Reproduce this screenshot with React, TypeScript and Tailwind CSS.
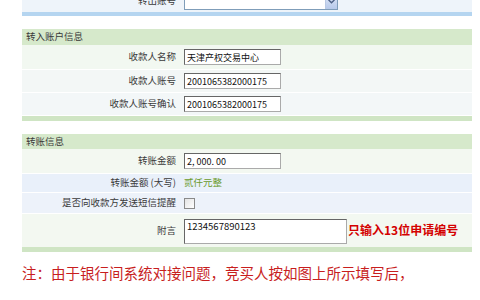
import React from "react";

const font = { fontFamily: '"Noto Sans CJK SC", "Noto Sans", sans-serif' };

function Row({
  label,
  bg,
  h,
  children,
}: {
  label: string;
  bg: string;
  h: string;
  children?: React.ReactNode;
}) {
  return (
    <div className={`flex items-center border-b border-white ${bg} ${h}`}>
      <div className="w-[158px] shrink-0 pr-[4px] text-right text-[9.5px] leading-none text-[#3a3a3a]">
        {label}
      </div>
      <div className="flex flex-1 items-center pl-[4px]">{children}</div>
    </div>
  );
}

function Input({ value, w = "w-[97px]", h = "h-[16px]" }: { value: string; w?: string; h?: string }) {
  return (
    <div
      className={`${w} ${h} flex items-center border border-t-[#666] border-l-[#666] border-r-[#aaa] border-b-[#aaa] bg-white pl-[2px] text-[9px] leading-none text-[#111]`}
      style={{ fontFamily: '"Noto Sans CJK SC", "Liberation Sans", sans-serif' }}
    >
      {value}
    </div>
  );
}

export default function App() {
  return (
    <div className="h-[300px] w-[480px] overflow-hidden bg-white" style={font}>
      <div className="ml-[22px] w-[450px]">
        {/* top row (cut) */}
        <div className="-mt-[10px] flex h-[22px] items-center bg-[#eef4fa]">
          <div className="w-[158px] shrink-0 pr-[4px] text-right text-[9.5px] leading-none text-[#3a3a3a]">
            转出账号
          </div>
          <div className="pl-[4px]">
            <div className="flex h-[17px] w-[154px] items-center justify-end border border-[#7f9db9] bg-white">
              <div className="flex h-[15px] w-[12px] items-center justify-center border-l border-[#b9c9e4] bg-gradient-to-b from-[#dfe8f7] to-[#b7c9ea]">
                <svg width="7" height="5" viewBox="0 0 7 5">
                  <path d="M0.5 0.8 L3.5 3.8 L6.5 0.8" stroke="#4d6185" strokeWidth="1.4" fill="none" />
                </svg>
              </div>
            </div>
          </div>
        </div>
        <div className="h-[4px] bg-[#b5d5f0]" />

        <div className="h-[13px]" />

        {/* section 1 */}
        <div className="flex h-[16px] items-center bg-[#d6e9cb] pl-[4px] text-[9.5px] leading-none text-[#3a3a3a]">
          转入账户信息
        </div>
        <Row label="收款人名称" bg="bg-[#f2f8f1]" h="h-[25px]">
          <Input value="天津产权交易中心" />
        </Row>
        <Row label="收款人账号" bg="bg-[#f3f7f6]" h="h-[23px]">
          <Input value="2001065382000175" />
        </Row>
        <Row label="收款人账号确认" bg="bg-[#f3f7f8]" h="h-[23px]">
          <Input value="2001065382000175" />
        </Row>
        <div className="h-[5px] bg-[#cfe5c4]" />

        <div className="h-[13px]" />

        {/* section 2 */}
        <div className="flex h-[15px] items-center bg-[#d6e9cb] pl-[4px] text-[9.5px] leading-none text-[#3a3a3a]">
          转账信息
        </div>
        <Row label="转账金额" bg="bg-[#f3f8f1]" h="h-[25px]">
          <Input value="2, 000. 00" />
        </Row>
        <Row label="转账金额 (大写)" bg="bg-[#e9f0fa]" h="h-[19px]">
          <span className="text-[9.5px] leading-none text-[#6a9a2c]">贰仟元整</span>
        </Row>
        <Row label="是否向收款方发送短信提醒" bg="bg-[#edf2fa]" h="h-[21px]">
          <div className="h-[11px] w-[11px] border border-[#8a8a8a] bg-gradient-to-br from-[#e4e4e4] to-white" />
        </Row>
        <div className="flex h-[33px] items-center bg-[#f3f8f1]">
          <div className="w-[158px] shrink-0 pr-[4px] text-right text-[9.5px] leading-none text-[#3a3a3a]">
            附言
          </div>
          <div className="flex flex-1 items-start self-stretch pl-[4px] pt-[5px]">
            <div
              className="flex h-[25px] w-[163px] items-start border border-t-[#666] border-l-[#666] border-r-[#aaa] border-b-[#aaa] bg-white pl-[2px] pt-[2px] text-[9.5px] leading-none text-[#111]"
              style={{ fontFamily: '"Noto Sans CJK SC", "Liberation Sans", sans-serif' }}
            >
              1234567890123
            </div>
            <span className="ml-[1px] mt-[5px] whitespace-nowrap text-[12px] font-bold leading-none text-[#d40000]">
              只输入13位申请编号
            </span>
          </div>
        </div>
        <div className="h-[5px] bg-[#cfe5c4]" />
      </div>

      <div className="ml-[22px] mt-[12px] whitespace-nowrap text-[14.5px] leading-[18px] text-[#c81e1e]">
        注：由于银行间系统对接问题，竞买人按如图上所示填写后，
      </div>
    </div>
  );
}
